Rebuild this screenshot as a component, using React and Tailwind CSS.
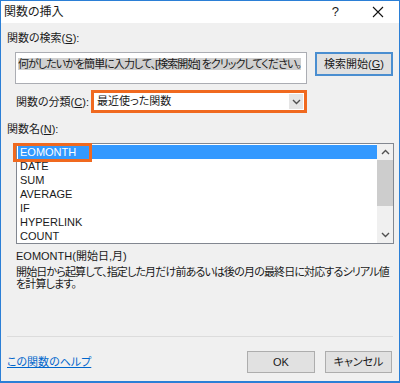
import React from 'react';

const font = "font-['Liberation_Sans','Noto_Sans_CJK_JP',sans-serif] [font-feature-settings:'palt']";

const functions = ['EOMONTH', 'DATE', 'SUM', 'AVERAGE', 'IF', 'HYPERLINK', 'COUNT'];

const Chevron = ({ up }) => (
  <svg width="9" height="6" viewBox="0 0 9 6" className={up ? 'rotate-180' : ''}>
    <path d="M1 1l3.5 3.5L8 1" fill="none" stroke="#505050" strokeWidth="1.4" />
  </svg>
);

const App = () => {
  return (
    <div className={`w-[400px] h-[383px] bg-[#f0f0f0] border border-b-2 border-[#2b7fd6] flex flex-col text-[11px] text-[#1a1a1a] overflow-hidden whitespace-nowrap ${font}`}>
      {/* title bar */}
      <div className="h-[22px] bg-white flex items-center shrink-0">
        <span className="ml-[3px] text-[12px]">関数の挿入</span>
        <span className="ml-auto mr-[33px] text-[13px]">?</span>
        <svg width="12" height="12" viewBox="0 0 12 12" className="mr-[15px]">
          <path d="M1 1l10 10M11 1L1 11" stroke="#111" strokeWidth="1.1" />
        </svg>
      </div>

      <div className="flex-1 flex flex-col px-[6px]">
        <div className="mt-[8px] leading-[14px]">
          関数の検索(<span className="underline">S</span>):
        </div>

        <div className="mt-[7px] ml-[8px] flex items-start">
          <div className="w-[292px] h-[32px] bg-white border border-[#abadb3] pt-[3px] pl-[2px] overflow-hidden">
            <span className="bg-[#d0d0d0] leading-[13px] tracking-[-0.95px]">
              何がしたいかを簡単に入力して、[検索開始] をクリックしてください。
            </span>
          </div>
          <button className="ml-[8px] w-[78px] h-[24px] bg-[#e1e1e1] border-2 border-[#4a8ed0] leading-[14px]">
            検索開始(<span className="underline">G</span>)
          </button>
        </div>

        <div className="mt-[6px] ml-[9px] flex items-center">
          <div className="leading-[14px]">
            関数の分類(<span className="underline">C</span>):
          </div>
          <div className="ml-auto mr-[86px] w-[216px] h-[23px] border-[3px] border-[#f0691f] bg-white flex items-center">
            <span className="ml-[3px]">最近使った関数</span>
            <div className="ml-auto mr-[1px] w-[14px] h-[15px] bg-[#e5e5e5] flex items-center justify-center">
              <Chevron />
            </div>
          </div>
        </div>

        <div className="mt-[9px] leading-[14px]">
          関数名(<span className="underline">N</span>):
        </div>

        {/* function list */}
        <div className="relative mt-[7px] ml-[9px] w-[378px] h-[101px] bg-white border border-[#828790] flex">
          <div className="flex-1 pt-[1px] pl-[1px] overflow-hidden">
            {functions.map((f, i) => (
              <div
                key={f}
                className={`h-[14px] leading-[14px] pl-[2px] ${i === 0 ? 'bg-[#3399ff] text-white' : ''}`}
              >
                {f}
              </div>
            ))}
          </div>
          <div className="w-[16px] bg-[#f0f0f0] flex flex-col">
            <div className="h-[16px] flex items-center justify-center">
              <Chevron up />
            </div>
            <div className="h-[46px] bg-[#cdcdcd]" />
            <div className="flex-1" />
            <div className="h-[16px] flex items-center justify-center">
              <Chevron />
            </div>
          </div>
          <div className="absolute left-[-4px] top-[-1px] w-[79px] h-[19px] border-[3px] border-[#f0691f]" />
        </div>

        <div className="mt-[5px] ml-[9px] leading-[14px]">EOMONTH(開始日,月)</div>
        <div className="mt-[3px] ml-[9px] leading-[12px] tracking-[-0.85px]">
          開始日から起算して、指定した月だけ前あるいは後の月の最終日に対応するシリアル値
          <br />
          を計算します。
        </div>

        <div className="mt-auto mb-[14px] border-t border-[#dcdcdc]" />

        <div className="flex items-center mb-[8px]">
          <a className="text-[#0066cc] underline leading-[14px]">この関数のヘルプ</a>
          <button className="ml-auto w-[68px] h-[22px] bg-[#e1e1e1] border border-[#adadad]">OK</button>
          <button className="ml-[10px] mr-[1px] w-[67px] h-[22px] bg-[#e1e1e1] border border-[#adadad]">
            キャンセル
          </button>
        </div>
      </div>
    </div>
  );
};

export default App;
